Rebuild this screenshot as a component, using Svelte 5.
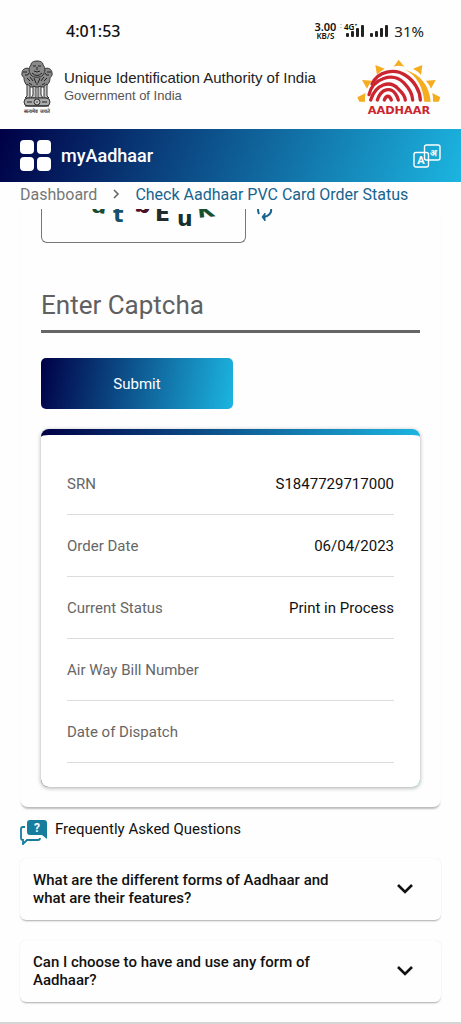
<script lang="ts">
	interface StatusRow {
		label: string;
		value: string;
	}

	interface Faq {
		question: string;
		open: boolean;
	}

	const rows: StatusRow[] = [
		{ label: 'SRN', value: 'S1847729717000' },
		{ label: 'Order Date', value: '06/04/2023' },
		{ label: 'Current Status', value: 'Print in Process' },
		{ label: 'Air Way Bill Number', value: '' },
		{ label: 'Date of Dispatch', value: '' },
	];

	let faqs: Faq[] = $state([
		{ question: 'What are the different forms of Aadhaar and what are their features?', open: false },
		{ question: 'Can I choose to have and use any form of Aadhaar?', open: false },
	]);

	let captcha = $state('');
</script>

<div class="page">
	<div class="status-bar">
		<span class="clock">4:01:53</span>
		<div class="indicators">
			<span class="speed">
				<span class="speed-value">3.00</span>
				<span class="speed-unit">KB/S</span>
			</span>
			<svg class="signals" width="50" height="24" viewBox="0 -3 50 24" aria-hidden="true">
				<g fill="#ccc">
					<rect x="0" y="2" width="2" height="1" />
					<rect x="0" y="5" width="2" height="1" />
				</g>
				<g fill="#222">
					<rect x="6" y="11" width="3" height="4" rx="1" />
					<rect x="11" y="9" width="3" height="6" rx="1" />
					<rect x="16" y="6" width="3" height="9" rx="1" />
					<rect x="21" y="3" width="3" height="12" rx="1" />
					<rect x="30" y="11" width="3" height="4" rx="1" />
					<rect x="35" y="9" width="3" height="6" rx="1" />
					<rect x="40" y="6" width="3" height="9" rx="1" />
					<rect x="45" y="3" width="3" height="12" rx="1" />
				</g>
				<text x="4" y="8" class="network">4G⁺</text>
			</svg>
			<span class="battery">31%</span>
		</div>
	</div>

	<header class="brand">
		<svg class="emblem" width="34" height="56" viewBox="0 0 34 56" role="img" aria-label="State Emblem of India">
			<g fill="#8a8a8a" stroke="#333" stroke-width="1">
				<path d="M10 9 C6 7 2 9 2 13 C1 16 4 17 4 18 C4 23 7 26 10 27 L24 27 C28 25 30 22 30 18 C30 17 33 16 32 13 C32 9 28 7 24 9 Z" />
				<path d="M11 5 C11 2 14 1 17 1 C20 1 23 2 23 5 C26 8 25 12 23 15 C21 18 13 18 11 15 C9 12 8 8 11 5 Z" />
				<path d="M7 24 L7 36 L5 38 L10 38 L10 26 Z M13 26 L13 35 L11 38 L16 38 L16 27 Z M18 27 L18 38 L23 38 L21 35 L21 26 Z M24 26 L24 38 L29 38 L27 36 L27 24 Z" fill="#c4c4c4" />
				<rect x="4" y="38" width="26" height="8" rx="4" fill="#aaa" />
			</g>
			<g fill="none" stroke="#222" stroke-width="1">
				<path d="M13 6 h3 M18 6 h3 M17 7 v3 M14 11 q3 2 6 0 M12 13 q5 5 10 0" />
				<path d="M3 12 h4 M27 12 h4 M5 15 q3 1 4 -2 M29 15 q-3 1 -4 -2" />
				<path d="M7 18 l3 3 M10 17 l3 4 M14 18 l2 5 M20 18 l-2 5 M24 17 l-3 4 M27 18 l-3 3 M9 23 l3 2 M25 23 l-3 2 M16 24 h2" />
				<path d="M7 42 h5 M22 42 h5 M5 46 h24" />
			</g>
			<circle cx="17" cy="42" r="3" fill="#eee" stroke="#333" />
			<path d="M14 42 h6 M17 39 v6 M15 40 l4 4 M19 40 l-4 4" stroke="#555" stroke-width="0.5" />
			<text x="17" y="53" class="motto">सत्यमेव जयते</text>
		</svg>
		<div class="brand-text">
			<p class="authority">Unique Identification Authority of India</p>
			<p class="government">Government of India</p>
		</div>
		<svg class="aadhaar-logo" width="84" height="57" viewBox="50 28 252 171" role="img" aria-label="Aadhaar">
			<g fill="#f5ac1e">
				<path d="M175 30 L192 51 Q176 46 160 51 Z" />
				<path d="M105 46 L133 57 Q119 65 110 76 Z" />
				<path d="M246 46 L242 76 Q232 64 218 57 Z" />
				<path d="M65 91 L95 93 Q85 103 80 117 Z" />
				<path d="M286 91 L272 117 Q267 104 257 93 Z" />
				<path d="M51 143 L76 130 Q72 143 74 156 L57 156 Z" />
				<path d="M300 143 L276 130 Q279 143 278 156 L295 156 Z" />
				<path d="M193 60 C241 73 267 108 271 156 L252 156 C247 110 229 76 193 60 Z" />
			</g>
			<g fill="none" stroke="#cb2530" stroke-width="10" stroke-linecap="round">
				<path d="M95 103 C113 64 163 56 194 76 C223 94 239 124 240 151" />
				<path d="M86 135 C97 87 157 66 190 99 C208 117 216 134 217 151" />
				<path d="M91 151 C106 103 149 90 174 118 C187 130 194 141 195 151" />
				<path d="M111 151 C123 115 152 113 165 132 C170 139 173 146 174 151" />
				<path d="M132 151 C137 136 148 136 153 151" />
			</g>
			<text x="176" y="194" class="logo-text">AADHAAR</text>
		</svg>
	</header>

	<nav class="app-bar" aria-label="myAadhaar">
		<button class="icon-button" aria-label="Menu">
			<svg width="31" height="31" viewBox="0 0 31 31" fill="#fff" aria-hidden="true">
				<rect width="14" height="14" rx="4" />
				<rect x="17" width="14" height="14" rx="4" />
				<rect y="17" width="14" height="14" rx="4" />
				<rect x="17" y="17" width="14" height="14" rx="4" />
			</svg>
		</button>
		<span class="app-name">myAadhaar</span>
		<button class="icon-button language" aria-label="Change language">
			<svg width="28" height="24" viewBox="0 0 28 24" aria-hidden="true">
				<g fill="none" stroke="#fff" stroke-width="1.4">
					<rect x="11.5" y="1" width="15.5" height="15" rx="2" />
					<rect x="1" y="8.5" width="14.5" height="14.5" rx="2" />
				</g>
				<text x="8" y="20" class="latin">A</text>
				<text x="20" y="12" class="hindi">अ</text>
			</svg>
		</button>
	</nav>

	<nav class="breadcrumb" aria-label="Breadcrumb">
		<a class="crumb" href="#dashboard">Dashboard</a>
		<svg width="8" height="10" viewBox="0 0 8 10" aria-hidden="true">
			<path d="M2 1 L6 5 L2 9" fill="none" stroke="#666" stroke-width="1.6" />
		</svg>
		<a class="crumb current" href="#order-status" aria-current="page">Check Aadhaar PVC Card Order Status</a>
	</nav>

	<main class="content">
		<section class="order-card">
			<div class="captcha-row">
				<div class="captcha-image">
					<svg width="160" height="32" viewBox="0 0 160 32" role="img" aria-label="Captcha">
						<g class="captcha-text">
							<text x="27" y="3" fill="#174c30" transform="rotate(8 27 3)">a</text>
							<text x="49" y="13" fill="#17506a">t</text>
							<text x="70" y="2" fill="#4a1028" transform="rotate(10 70 2)">b</text>
							<text x="91" y="12" fill="#222b2b">E</text>
							<text x="113" y="17" fill="#17302f">u</text>
							<text x="134" y="9" fill="#17502c" transform="rotate(-6 134 9)">K</text>
						</g>
					</svg>
				</div>
				<button class="refresh" aria-label="Refresh captcha">
					<svg width="16" height="13" viewBox="0 0 16 13" fill="none" stroke="#17648f" stroke-width="2" aria-hidden="true">
						<path d="M1 0 Q1 3 2 5" />
						<path d="M14 0 C15 4 11 8 6 8" />
						<path d="M8 4 L5 8 L8 12 Z" fill="#17648f" stroke-width="1" />
					</svg>
				</button>
			</div>

			<form onsubmit={(event) => event.preventDefault()}>
				<input class="captcha-input" type="text" placeholder="Enter Captcha" aria-label="Enter Captcha" bind:value={captcha} />
				<button class="submit" type="submit">Submit</button>
			</form>

			<div class="result">
				<table>
					<tbody>
						{#each rows as row (row.label)}
							<tr>
								<th scope="row">{row.label}</th>
								<td>{row.value}</td>
							</tr>
						{/each}
					</tbody>
				</table>
			</div>
		</section>

		<section class="faq">
			<h2>
				<svg width="27" height="26" viewBox="0 0 27 26" aria-hidden="true">
					<path d="M10 1 H24 Q27 1 27 4 V20 L22 16 H10 Q7 16 7 13 V4 Q7 1 10 1 Z" fill="#177d9f" />
					<path d="M5 8 H3 Q1 8 1 10 V19 Q1 21 3 21 V25 L7 21 H18 Q20 21 20 19" fill="none" stroke="#177d9f" stroke-width="1.8" />
					<text x="17" y="13" class="question-mark">?</text>
				</svg>
				Frequently Asked Questions
			</h2>
			{#each faqs as faq (faq.question)}
				<button class="faq-item" aria-expanded={faq.open} onclick={() => (faq.open = !faq.open)}>
					<span>{faq.question}</span>
					<svg class:open={faq.open} width="16" height="10" viewBox="0 0 16 10" aria-hidden="true">
						<path d="M1 1 L8 8 L15 1" fill="none" stroke="#111" stroke-width="2.6" />
					</svg>
				</button>
			{/each}
		</section>
	</main>

	<footer class="page-end"></footer>
</div>

<style>
	:global(body) {
		background: #fefefe;
	}

	.page {
		font-family: Roboto, 'Liberation Sans', sans-serif;
		font-size: 15px;
		color: #111;
	}

	button {
		font-family: inherit;
		border: 0;
		background: none;
		padding: 0;
		cursor: pointer;
	}

	svg {
		display: block;
		flex: none;
	}

	.status-bar {
		display: flex;
		justify-content: space-between;
		align-items: center;
		height: 60px;
		padding: 2px 37px 0 66px;
		box-sizing: border-box;
		font-family: 'Noto Sans', sans-serif;
	}

	.clock {
		font-size: 16px;
		font-weight: 500;
	}

	.indicators {
		display: flex;
		align-items: center;
		gap: 4px;
	}

	.speed {
		display: flex;
		flex-direction: column;
		align-items: center;
		font-weight: 600;
	}

	.speed-value {
		font-size: 11px;
		line-height: 10px;
	}

	.speed-unit {
		font-size: 8px;
		line-height: 8px;
	}

	.network {
		font-size: 8px;
		font-weight: 600;
	}

	.battery {
		font-size: 15px;
		color: #222;
	}

	.brand {
		display: flex;
		align-items: center;
		height: 69px;
		padding: 0 20px 14px;
		box-sizing: border-box;
	}

	.motto {
		font-size: 5px;
		font-weight: 600;
		text-anchor: middle;
		fill: #333;
	}

	.brand-text {
		flex: 1;
		padding: 0 0 2px 10px;
		font-family: 'Liberation Sans', sans-serif;
	}

	.brand-text p {
		margin: 0;
		line-height: 18px;
		white-space: nowrap;
	}

	.authority {
		font-size: 15px;
		color: #222;
	}

	.government {
		font-size: 13px;
		color: #555;
	}

	.logo-text {
		font-family: 'DejaVu Sans', sans-serif;
		font-size: 34px;
		font-weight: 700;
		text-anchor: middle;
		fill: #cb2530;
	}

	.app-bar {
		display: flex;
		align-items: center;
		gap: 10px;
		height: 53px;
		padding: 0 20px;
		background: linear-gradient(110deg, #000046, #1cb5e0);
		color: #fff;
	}

	.app-name {
		font-size: 18px;
		font-weight: 500;
	}

	.language {
		margin-left: auto;
	}

	.latin,
	.hindi {
		fill: #fff;
		font-weight: 700;
		text-anchor: middle;
	}

	.latin {
		font-size: 11px;
	}

	.hindi {
		font-size: 9px;
	}

	.breadcrumb {
		display: flex;
		align-items: center;
		gap: 15px;
		height: 24px;
		padding: 0 20px 3px;
		font-size: 16px;
	}

	.crumb {
		color: #777;
		text-decoration: none;
		white-space: nowrap;
	}

	.crumb.current {
		color: #17648f;
	}

	.content {
		padding: 0 20px;
	}

	.order-card {
		padding: 0 21px 20px;
		border-radius: 0 0 8px 8px;
		box-shadow: 0 3px 2px -1px #bbb;
	}

	.captcha-row {
		display: flex;
		gap: 11px;
	}

	.captcha-image {
		display: flex;
		justify-content: center;
		width: 205px;
		height: 34px;
		box-sizing: border-box;
		border: 1px solid #777;
		border-top: 0;
		border-radius: 0 0 6px 6px;
	}

	.captcha-text {
		font-family: 'DejaVu Sans', sans-serif;
		font-size: 22px;
		font-weight: 700;
	}

	.refresh {
		align-self: flex-start;
	}

	.captcha-input {
		display: block;
		width: 100%;
		height: 54px;
		margin-top: 36px;
		padding: 0;
		box-sizing: border-box;
		border: 0;
		border-bottom: 3px solid #666;
		background: none;
		font-family: inherit;
		font-size: 26px;
		color: #222;
		outline: 0;
	}

	.captcha-input::placeholder {
		color: #606060;
		opacity: 1;
	}

	.submit {
		display: block;
		width: 192px;
		height: 51px;
		margin-top: 25px;
		border-radius: 5px;
		background: linear-gradient(100deg, #000046, #1cb5e0);
		color: #fff;
		font-size: 15px;
	}

	.result {
		margin-top: 20px;
		padding: 18px 26px 24px;
		border-top: 6px solid transparent;
		border-radius: 8px;
		background:
			linear-gradient(#fff, #fff) padding-box,
			linear-gradient(90deg, #000046, #1cb5e0) border-box;
		box-shadow: 0 1px 4px #aaa;
	}

	table {
		width: 100%;
		border-collapse: collapse;
	}

	th,
	td {
		height: 61px;
		padding: 0;
		border-bottom: 1px solid #ddd;
		white-space: nowrap;
	}

	th {
		text-align: left;
		font-weight: 400;
		color: #666;
	}

	td {
		text-align: right;
	}

	.faq h2 {
		display: flex;
		align-items: flex-start;
		gap: 8px;
		margin: 0 0 13px;
		padding-top: 12px;
		font-size: 15px;
		font-weight: 400;
		line-height: 20px;
	}

	.question-mark {
		font-size: 12px;
		font-weight: 700;
		text-anchor: middle;
		fill: #fff;
	}

	.faq-item {
		display: flex;
		align-items: center;
		justify-content: space-between;
		gap: 60px;
		width: 100%;
		height: 62px;
		margin-bottom: 20px;
		padding: 0 28px 0 13px;
		border-radius: 6px;
		box-shadow: 0 2px 2px -1px #aaa, 0 0 1px #ddd;
		color: #111;
		font-size: 15px;
		font-weight: 500;
		line-height: 18px;
		text-align: left;
	}

	.open {
		transform: rotate(180deg);
	}

	.page-end {
		height: 2px;
		background: #d5d5d5;
	}
</style>
